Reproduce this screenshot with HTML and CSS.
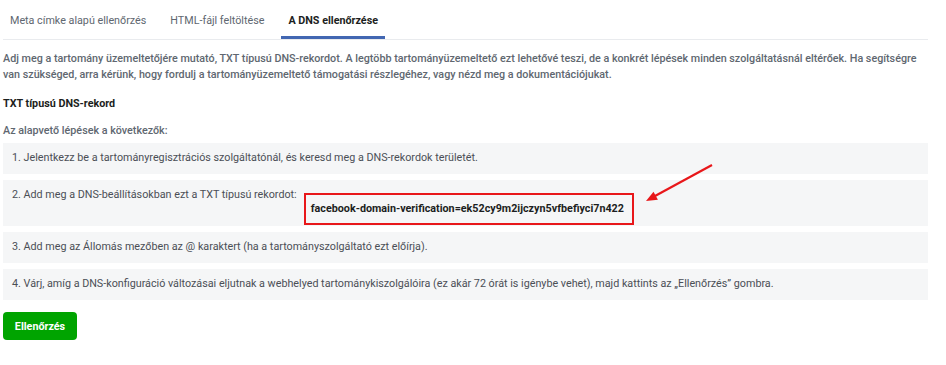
FILE: index.html
```html
<!DOCTYPE html>
<html lang="hu">
<head>
  <meta charset="UTF-8" />
  <title>Domain ellenőrzése</title>
  <link rel="stylesheet" href="styles.css">
</head>
<body>

<div class="panel">
  <div class="tabs">
    <div class="tab">Meta címke alapú ellenőrzés</div>
    <div class="tab">HTML-fájl feltöltése</div>
    <div class="tab active">A DNS ellenőrzése</div>
  </div>

  <p class="intro">Adj meg a tartomány üzemeltetőjére mutató, TXT típusú DNS-rekordot. A legtöbb tartományüzemeltető ezt lehetővé teszi, de a konkrét lépések minden szolgáltatásnál eltérőek. Ha segítségre van szükséged, arra kérünk, hogy fordulj a tartományüzemeltető támogatási részlegéhez, vagy nézd meg a dokumentációjukat.</p>

  <h4 class="title">TXT típusú DNS-rekord</h4>
  <p class="lead">Az alapvető lépések a következők:</p>

  <div class="steps">
    <div class="step">1. Jelentkezz be a tartományregisztrációs szolgáltatónál, és keresd meg a DNS-rekordok területét.</div>
    <div class="step step-code">
      <span>2. Add meg a DNS-beállításokban ezt a TXT típusú rekordot:</span>
      <span class="record">facebook-domain-verification=ek52cy9m2ijczyn5vfbefiyci7n422</span>
      <svg class="arrow" width="80" height="50" viewBox="0 0 80 50">
        <line x1="69" y1="3" x2="12" y2="34" stroke="#e8171a" stroke-width="2.2" />
        <polygon points="3,39 10.5,29.7 14.9,37.7" fill="#e8171a" />
      </svg>
    </div>
    <div class="step">3. Add meg az Állomás mezőben az @ karaktert (ha a tartományszolgáltató ezt előírja).</div>
    <div class="step">4. Várj, amíg a DNS-konfiguráció változásai eljutnak a webhelyed tartománykiszolgálóira (ez akár 72 órát is igénybe vehet), majd kattints az „Ellenőrzés” gombra.</div>
  </div>

  <button class="verify-btn">Ellenőrzés</button>
</div>

</body>
</html>
```

FILE: styles.css
```css
body {
  margin: 0;
  font-family: Roboto, "Liberation Sans", Arial, sans-serif;
  font-size: 10.75px;
  line-height: 16px;
  color: #606770;
  background: #fff;
}

.panel {
  width: 925px;
  margin-left: 3px;
}

.tabs {
  display: flex;
  height: 40px;
  border-bottom: 1px solid #e9ebee;
  box-sizing: border-box;
}
.tab {
  padding: 13px 7px 0;
  margin-right: 10px;
  color: #606770;
  box-sizing: border-box;
  height: 39px;
}
.tab.active {
  color: #1c1e21;
  font-weight: bold;
  border-bottom: 3px solid #4267b2;
}

.intro {
  margin: 11px 0 0;
  font-weight: 500;
}

.title {
  margin: 13px 0 0;
  font-size: 10.75px;
  color: #1c1e21;
  font-weight: bold;
}

.lead {
  margin: 11px 0 0;
  font-weight: 500;
}

.steps {
  margin-top: 4px;
  display: flex;
  flex-direction: column;
  gap: 6px;
}
.step {
  background: #f5f6f7;
  padding: 7px 9px;
  color: #4b4f56;
  min-height: 31px;
  box-sizing: border-box;
}
.step-code {
  position: relative;
  display: flex;
  align-items: flex-start;
  padding-bottom: 1px;
}
.record {
  margin: 6px 0 0 7px;
  padding: 6px 8px 6px 5px;
  border: 2px solid #e8171a;
  font-weight: bold;
  color: #1c1e21;
}
.arrow {
  position: absolute;
  left: 640px;
  top: -18px;
}

.verify-btn {
  margin-top: 12px;
  background: #00a400;
  color: #fff;
  border: none;
  border-radius: 4px;
  font-family: inherit;
  font-size: 10.75px;
  font-weight: bold;
  padding: 0 11px;
  height: 28px;
  width: 74px;
  cursor: pointer;
}
```
